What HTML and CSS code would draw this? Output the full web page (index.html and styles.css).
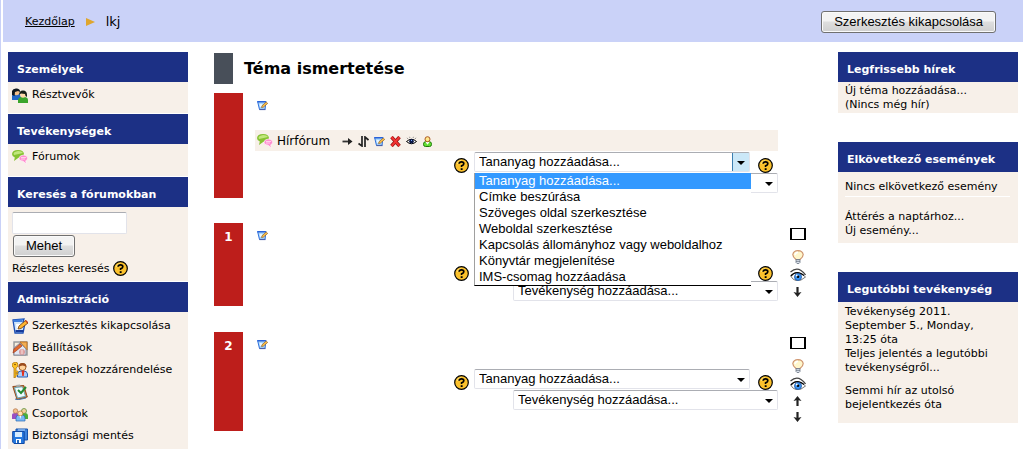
FILE: index.html
```html
<!DOCTYPE html>
<html lang="hu">
<head>
<meta charset="utf-8">
<meta name="viewport" content="width=device-width, initial-scale=1">
<title>lkj</title>
<link rel="stylesheet" href="styles.css">
</head>
<body>
<svg class="sprite" aria-hidden="true">
  <symbol id="i-edit" viewBox="0 0 16 16">
    <path d="M1 2 12 1l-1 3 2 1-2 10H3z" fill="#cfe6fb" stroke="#1c4fb5" stroke-width="1.3"/>
    <path d="M1 2 11 1l-1 3H2z" fill="#3f7fe0"/>
    <path d="M4 6h5l-2 6H5z" fill="#fff"/>
    <path d="M3.500 13h8" stroke="#163a9a" stroke-width="2"/>
    <path d="m6 11 1-3 6.500-5.500L16 5 9 10.500z" fill="#ffb52e" stroke="#6a3a10" stroke-width=".8"/>
    <path d="m13.500 2.500 2.300 2.300" stroke="#c43c16" stroke-width="1.500"/>
  </symbol>
  <symbol id="i-edit-small" viewBox="0 0 11 11">
    <path d="M.6 1.500h8.400L8 9.500H2.500z" fill="#a9d6fa" stroke="#2f6fdc"/>
    <path d="M.3 1h8.200v1.500H.6z" fill="#2a62d8"/>
    <path d="M2.500 4h3l-1 3H3z" fill="#e8f6ff"/>
    <path d="M2.500 9.500h6" stroke="#4a5fa8" stroke-width="1.200"/>
    <path d="M4.500 7.500 5 5.800 9.200 2l1.500 1.400L6.300 7.200z" fill="#ffc24a" stroke="#84501a" stroke-width=".6"/>
  </symbol>
  <symbol id="i-users" viewBox="0 0 16 16">
    <path d="M0 13V9q0-2 3-2h4q2 1 2 3v3z" fill="#2468c8"/>
    <circle cx="4.500" cy="5.500" r="2.800" fill="#f5c08a"/>
    <path d="M0 8V4Q1 1 5 1.500 8.500 2 8 5L6 4 3 5l-.5 4z" fill="#101820"/>
    <path d="M6 16v-3.500Q6.500 10 9 10h4q3 .5 3 3v3z" fill="#3ba52c"/>
    <circle cx="11" cy="8" r="2.800" fill="#ffd9a8"/>
    <path d="M7 8Q7 3.500 11 3.500t4 4.500v2l-1.500-1L13 7l-4-.5z" fill="#182018"/>
  </symbol>
  <symbol id="i-forum" viewBox="0 0 16 16">
    <path d="M6 1q5.500 0 6 4-.5 3.500-5.500 3.800L2 12l.8-3.500Q0 7.500 0 5q.5-4 6-4z" fill="#86c232"/>
    <path d="M6 2q4 0 5 2-4 1-9 2Q0 3 6 2z" fill="#c1e77d"/>
    <path d="M11.500 6q4 .2 4.200 3.200-.2 2-2 2.600l.6 3.200-3.300-2.800Q7 12 7 9.200 7.500 6.200 11.500 6z" fill="#ff8fd0" stroke="#fff" stroke-width=".6"/>
    <path d="M9 8.500h5M9 10h4" stroke="#ffd1eb"/>
  </symbol>
  <symbol id="i-settings" viewBox="0 0 16 16">
    <path d="M1 1h14.500v14.500H1z" fill="#fff"/>
    <path d="M2 2h13v13H2z" fill="#f6eedf" stroke="#999" stroke-width="1.500"/>
    <path d="M8 2h7v8z" fill="#f2ae55" stroke="#c17520"/>
    <path d="M2 15V8l6-5 6 6v6z" fill="#e1e7f3" stroke="#8e8f9e"/>
    <path d="m1 13 1-4 6-5 2 2-6 5z" fill="#e36b2e" stroke="#a13b20" stroke-width=".7"/>
    <path d="M8 10h4v4H8zM7 12h6" fill="#fff" stroke="#d78585"/>
  </symbol>
  <symbol id="i-roles" viewBox="0 0 16 16">
    <circle cx="10.500" cy="5" r="3.500" fill="#ffd29a" stroke="#a36127"/>
    <path d="M6.500 5q0-4 4-4t4 4q-4-3-8 0z" fill="#9b4b1c"/>
    <path d="M5.500 15v-3q.5-3 3.500-3h3q3 0 3.500 3v3z" fill="#a7ccfa" stroke="#295fb4"/>
    <path d="m10 9 1 5 1-5z" fill="#e52c15" stroke="#e52c15"/>
    <path d="M3 0q3 0 3 3 0 2-2 3v9l-2 1V6Q0 5 0 3t3-3z" fill="#ffc324" stroke="#a26809" stroke-width=".7"/>
    <path d="M4 9h2v1.500H4v1h2V13H4" fill="#ffc324" stroke="#a26809" stroke-width=".5"/>
    <circle cx="3" cy="2.500" r=".8" fill="#6d4507"/>
  </symbol>
  <symbol id="i-grades" viewBox="0 0 16 16">
    <path d="m.8 2.500 11-1 3.500 11.500L5 15.500z" fill="#dc762e" stroke="#8e4b21"/>
    <path d="m2.500 3.500 8-.7 3 9.500-8 1.700z" fill="#effbff" stroke="#65a9ba"/>
    <path d="m4 1 4-.5.500 2-4 .5z" fill="#aaa"/>
    <path d="m6 6 3 3 5-6" fill="none" stroke="#238b32" stroke-width="2"/>
    <path d="m3 15 3 .8 8-1.800" stroke="#4374a5" fill="none"/>
  </symbol>
  <symbol id="i-groups" viewBox="0 0 16 16">
    <path d="M0 13V9q0-2 3-2h3v6z" fill="#9a4fc2"/>
    <path d="M10 13V7h3q3 0 3 3v3z" fill="#4aae38"/>
    <circle cx="3.500" cy="5" r="2.300" fill="#f4bd8a" stroke="#b27447" stroke-width=".7"/>
    <circle cx="12" cy="5" r="2.500" fill="#f4ce9a" stroke="#5a943d" stroke-width=".8"/>
    <path d="M4 15v-3q0-3 3-3h3q3 0 3 3v3z" fill="#79b8f5" stroke="#2a68b5" stroke-width=".7"/>
    <circle cx="8.300" cy="7.500" r="2.500" fill="#ffe0b5" stroke="#c27b36" stroke-width=".8"/>
    <path d="m7.500 10 .8 3 .8-3z" fill="#fff"/>
  </symbol>
  <symbol id="i-backup" viewBox="0 0 16 16">
    <path d="M4 1h11.500v11H4z" fill="#3c83df" stroke="#1552ad"/>
    <path d="M.7 3.500h11.500v12H2L.7 14z" fill="#2578df" stroke="#1149a3"/>
    <path d="M3 4h7v5H3z" fill="#d7ecff"/>
    <path d="M4 11h5v4H4z" fill="#fff"/>
    <path d="M5 12h2v3H5z" fill="#2469bc"/>
    <path d="M6 2h7" stroke="#b6daff"/>
  </symbol>
  <symbol id="i-help" viewBox="0 0 15 15">
    <circle cx="7.500" cy="7.500" r="6.800" fill="#fbc12c" stroke="#000" stroke-width="1.200"/>
    <path d="M3 6q1-3 4-3.500" fill="none" stroke="#ffe680"/>
    <path d="M5.200 5.800Q5.200 3.900 7.500 3.900t2.300 1.800Q9.800 7 7.600 7.800V9" fill="none" stroke="#000" stroke-width="1.700"/>
    <path d="M6.700 10.200h1.900v1.800H6.700z"/>
  </symbol>
  <symbol id="i-right" viewBox="0 0 11 11"><path d="M.5 5.500h8" stroke="#333" stroke-width="1.800"/><path d="m6 2 4.500 3.500L6 9z" fill="#222"/></symbol>
  <symbol id="i-move" viewBox="0 0 11 11"><path d="M4 0v10L.5 7.500M7 11V1l3.500 3" fill="none" stroke="#222" stroke-width="1.700"/></symbol>
  <symbol id="i-delete" viewBox="0 0 11 11"><path d="m1.500 1 8 9M9.500 1l-8 9" stroke="#8f0d0d" stroke-width="3.400"/><path d="m1.500 1 8 9M9.500 1l-8 9" stroke="#f13232" stroke-width="2"/></symbol>
  <symbol id="i-eye-small" viewBox="0 0 11 11"><path d="M.5 5.500q5-4.500 10 0-5 4.500-10 0z" fill="#fff" stroke="#000"/><path d="M2 3 1 1.800M4 2 3.500.8M7 2l.5-1.200M9 3l1-1.200" stroke="#555" stroke-width=".6"/><circle cx="5.500" cy="5.300" r="2.300" fill="#0a1746"/><path d="M5 4h1v1H5z" fill="#75a4ff"/></symbol>
  <symbol id="i-person" viewBox="0 0 11 11"><rect x="1.500" y="5.800" width="8" height="4.700" rx="2" fill="#62dd31" stroke="#207b0b"/><path d="m3.500 6 2 2.800 2-2.800z" fill="#fff"/><circle cx="5.500" cy="3.200" r="2.500" fill="#ffe88b" stroke="#ac5720"/></symbol>
  <symbol id="i-bulb" viewBox="0 0 12 14"><path d="M4 9.500Q.8 7 .8 4.500 1.500.8 6 .7q4.500.1 5.200 3.800Q11.200 7 8 9.500z" fill="#fff7cc" stroke="#cf956f" stroke-width="1.200"/><path d="M3 5Q3.500 2.500 6 2.200" stroke="#fff" stroke-width="1.500" fill="none"/><path d="M4 9.500h4v3L7 13.500H5l-1-1z" fill="#dce3ed" stroke="#6d7786" stroke-width=".8"/><path d="M4 11.300h4" stroke="#66707e" stroke-width=".8"/></symbol>
  <symbol id="i-eye" viewBox="0 0 16 14"><path d="M.5 4Q6-.8 11 2.500q3 2 4.500 4.500" fill="none" stroke="#444" stroke-width="1.300"/><path d="M1 8.500Q4 3.500 9 5q4 1 6.500 4Q11 13.500 6 12.500 3 12 1 8.500z" fill="#fff" stroke="#555" stroke-width=".8"/><path d="M.8 8Q5 3 11 5.500l3 2" fill="none" stroke="#000" stroke-width="1.300"/><circle cx="8" cy="8.900" r="3.500" fill="#3d97f5" stroke="#164f9e" stroke-width=".8"/><circle cx="8" cy="8.700" r="1.300"/><circle cx="6.700" cy="7.500" r=".9" fill="#fff"/></symbol>
  <symbol id="i-down" viewBox="0 0 9 12"><path d="M4.500 1v7" stroke="#222" stroke-width="2.200"/><path d="M.5 6 4.500 7l4-1-4 5z" fill="#222"/></symbol>
  <symbol id="i-up" viewBox="0 0 9 12"><path d="M4.500 11V4" stroke="#222" stroke-width="2.200"/><path d="m.5 6 4-5 4 5-4-1z" fill="#222"/></symbol>
</svg>

<div class="page">
  <header class="navbar">
    <nav class="crumbs" aria-label="Navigáció">
      <a href="#">Kezdőlap</a>
      <svg class="crumb-arrow" viewBox="0 0 9 8" aria-hidden="true"><path d="M0 0l9 4-9 4z" fill="#dfa62e"/></svg>
      <span class="here">lkj</span>
    </nav>
    <button class="btn" type="button">Szerkesztés kikapcsolása</button>
  </header>

  <div class="columns">
    <aside class="side left">
      <section class="block">
        <h2>Személyek</h2>
        <ul class="links people">
          <li><svg class="icon"><use href="#i-users"/></svg><a href="#">Résztvevők</a></li>
        </ul>
      </section>
      <section class="block">
        <h2>Tevékenységek</h2>
        <ul class="links activities">
          <li><svg class="icon"><use href="#i-forum"/></svg><a href="#">Fórumok</a></li>
        </ul>
      </section>
      <section class="block">
        <h2>Keresés a fórumokban</h2>
        <form class="search">
          <input class="field" type="text" aria-label="Keresés a fórumokban">
          <button class="btn" type="button">Mehet</button>
          <div class="advanced"><a href="#">Részletes keresés</a><svg class="help"><use href="#i-help"/></svg></div>
        </form>
      </section>
      <section class="block grow">
        <h2>Adminisztráció</h2>
        <ul class="links">
          <li><svg class="icon"><use href="#i-edit"/></svg><a href="#">Szerkesztés kikapcsolása</a></li>
          <li><svg class="icon"><use href="#i-settings"/></svg><a href="#">Beállítások</a></li>
          <li><svg class="icon"><use href="#i-roles"/></svg><a href="#">Szerepek hozzárendelése</a></li>
          <li><svg class="icon"><use href="#i-grades"/></svg><a href="#">Pontok</a></li>
          <li><svg class="icon"><use href="#i-groups"/></svg><a href="#">Csoportok</a></li>
          <li><svg class="icon"><use href="#i-backup"/></svg><a href="#">Biztonsági mentés</a></li>
        </ul>
      </section>
    </aside>

    <main class="content">
      <h1>Téma ismertetése</h1>

      <section class="topic intro">
        <div class="tab"></div>
        <div class="body">
          <a class="summary" href="#" aria-label="Összefoglaló szerkesztése"><svg class="mini"><use href="#i-edit-small"/></svg></a>
          <div class="activity">
            <svg class="icon"><use href="#i-forum"/></svg><a href="#">Hírfórum</a>
            <span class="commands">
              <svg class="mini"><use href="#i-right"/></svg>
              <svg class="mini"><use href="#i-move"/></svg>
              <svg class="mini"><use href="#i-edit-small"/></svg>
              <svg class="mini"><use href="#i-delete"/></svg>
              <svg class="mini"><use href="#i-eye-small"/></svg>
              <svg class="mini"><use href="#i-person"/></svg>
            </span>
          </div>
          <div class="add">
            <svg class="help"><use href="#i-help"/></svg>
            <div class="pick open">
              <select aria-label="Tananyag hozzáadása"><option>Tananyag hozzáadása...</option></select>
              <ul class="menu" role="listbox" aria-label="Tananyag">
                <li role="option" aria-selected="true">Tananyag hozzáadása...</li>
                <li role="option">Címke beszúrása</li>
                <li role="option">Szöveges oldal szerkesztése</li>
                <li role="option">Weboldal szerkesztése</li>
                <li role="option">Kapcsolás állományhoz vagy weboldalhoz</li>
                <li role="option">Könyvtár megjelenítése</li>
                <li role="option">IMS-csomag hozzáadása</li>
              </ul>
            </div>
            <svg class="help"><use href="#i-help"/></svg>
          </div>
          <div class="add second">
            <div class="pick"><select aria-label="Tevékenység hozzáadása"><option>Tevékenység hozzáadása...</option></select></div>
          </div>
        </div>
      </section>

      <section class="topic">
        <div class="tab">1</div>
        <div class="body">
          <a class="summary" href="#" aria-label="Összefoglaló szerkesztése"><svg class="mini"><use href="#i-edit-small"/></svg></a>
          <div class="add">
            <svg class="help"><use href="#i-help"/></svg>
            <div class="pick"><select aria-label="Tananyag hozzáadása, 1. téma"><option>Tananyag hozzáadása...</option></select></div>
            <svg class="help"><use href="#i-help"/></svg>
          </div>
          <div class="add second">
            <div class="pick"><select aria-label="Tevékenység hozzáadása, 1. téma"><option>Tevékenység hozzáadása...</option></select></div>
          </div>
        </div>
        <div class="tools">
          <span class="only"></span>
          <svg class="bulb"><use href="#i-bulb"/></svg>
          <svg class="eye"><use href="#i-eye"/></svg>
          <svg class="arrow"><use href="#i-down"/></svg>
        </div>
      </section>

      <section class="topic">
        <div class="tab">2</div>
        <div class="body">
          <a class="summary" href="#" aria-label="Összefoglaló szerkesztése"><svg class="mini"><use href="#i-edit-small"/></svg></a>
          <div class="add">
            <svg class="help"><use href="#i-help"/></svg>
            <div class="pick"><select aria-label="Tananyag hozzáadása, 2. téma"><option>Tananyag hozzáadása...</option></select></div>
            <svg class="help"><use href="#i-help"/></svg>
          </div>
          <div class="add second">
            <div class="pick"><select aria-label="Tevékenység hozzáadása, 2. téma"><option>Tevékenység hozzáadása...</option></select></div>
          </div>
        </div>
        <div class="tools">
          <span class="only"></span>
          <svg class="bulb"><use href="#i-bulb"/></svg>
          <svg class="eye"><use href="#i-eye"/></svg>
          <svg class="arrow"><use href="#i-up"/></svg>
          <svg class="arrow"><use href="#i-down"/></svg>
        </div>
      </section>
    </main>

    <aside class="side right">
      <section class="block">
        <h2>Legfrissebb hírek</h2>
        <div class="text">
          <a href="#">Új téma hozzáadása...</a>
          <p>(Nincs még hír)</p>
        </div>
      </section>
      <section class="block">
        <h2>Elkövetkező események</h2>
        <div class="text events">
          <p class="none">Nincs elkövetkező esemény</p>
          <a href="#">Áttérés a naptárhoz...</a>
          <a href="#">Új esemény...</a>
        </div>
      </section>
      <section class="block">
        <h2>Legutóbbi tevékenység</h2>
        <div class="text recent">
          <p>Tevékenység 2011. September 5., Monday, 13:25 óta</p>
          <a href="#">Teljes jelentés a legutóbbi tevékenységről...</a>
          <p class="nothing">Semmi hír az utolsó bejelentkezés óta</p>
        </div>
      </section>
    </aside>
  </div>
</div>
</body>
</html>
```

FILE: styles.css
```css
* { box-sizing: border-box; }

body {
  margin: 0;
  background: #fff;
  color: #000;
  font: 11px/14px Verdana, "DejaVu Sans", sans-serif;
}

a { color: inherit; text-decoration: none; }
h1, h2, p, ul { margin: 0; padding: 0; }
ul { list-style: none; }
svg { display: block; flex: none; }
.sprite { position: absolute; width: 0; height: 0; }

.page {
  display: flex;
  flex-direction: column;
  min-height: 100vh;
  padding: 0 2px;
  border-left: 1px solid #c9d1f7;
}

/* Top bar */
.navbar {
  display: flex;
  align-items: center;
  justify-content: space-between;
  height: 42px;
  padding: 2px 27px 0 22px;
  background: #cad2f8;
}
.crumbs { display: flex; align-items: center; gap: 11px; }
.crumbs a { text-decoration: underline; }
.crumb-arrow { width: 9px; height: 8px; }
.here { font-size: 13px; }

.btn {
  height: 22px;
  padding: 0 12px;
  border: 1px solid #707070;
  border-radius: 3px;
  background: linear-gradient(#f3f3f3 0 45%, #dedede 50%, #cfcfcf);
  box-shadow: inset 0 0 0 1px #fafafa;
  color: #000;
  font: 13px/20px Arial, "Liberation Sans", sans-serif;
}

/* Three columns */
.columns {
  flex: 1;
  display: grid;
  grid-template-columns: 180px 1fr 180px;
  padding: 10px 5px 0 5px;
}
.side { display: flex; flex-direction: column; }
.left { gap: 1px; }
.right { gap: 29px; }

.block { background: #f7f0e9; }
.grow { flex: 1; }
.block h2 {
  height: 30px;
  padding: 11px 9px 0;
  background: #1c3085;
  color: #fff;
  font-size: 11px;
  line-height: 14px;
}
.icon { width: 16px; height: 16px; }
.help { width: 15px; height: 15px; }

.links { padding: 3px 4px 0; }
.links li { display: flex; align-items: center; gap: 4px; height: 22px; }
.people { padding: 2px 4px 7px; }
.activities { padding: 2px 4px 8px; }

.search {
  display: flex;
  flex-direction: column;
  align-items: flex-start;
  padding: 5px 4px;
}
.field {
  width: 115px;
  height: 22px;
  border: 1px solid #e2e3ea;
  border-top-color: #abadb3;
  border-radius: 2px;
  background: #fff;
  font: 13px Arial, "Liberation Sans", sans-serif;
}
.search .btn { margin: 1px 1px 4px; }
.advanced { display: flex; align-items: center; gap: 3px; }

.text { padding: 2px 8px 1px 7px; }
.text a { display: block; }
.events { padding: 8px 8px 5px 7px; }
.none { padding-bottom: 2px; border-bottom: 1px solid #fff; margin-bottom: 13px; white-space: nowrap; }
.recent { padding: 3px 16px 11px 7px; }
.nothing { margin-top: 9px; }

/* Course topics */
.content { padding: 0 32px 0 26px; }
h1 {
  margin: 1px 0 9px;
  padding-left: 11px;
  border-left: 19px solid #484f59;
  font-size: 16px;
  line-height: 31px;
}
.topic {
  display: grid;
  grid-template-columns: 29px 1fr 17px;
  column-gap: 11px;
  margin-bottom: 26px;
}
.intro { margin-bottom: 25px; }
.tab {
  padding-top: 7px;
  background: #bd1e1b;
  color: #fff;
  font-size: 12px;
  font-weight: bold;
  text-align: center;
}
.body { padding: 7px 0 5px 1px; }
.mini { width: 11px; height: 11px; }
.summary { display: block; width: 11px; margin: 0 0 19px 2px; }
.activity {
  display: flex;
  align-items: center;
  height: 21px;
  margin-bottom: 1px;
  padding-left: 2px;
  background: #f7f0e9;
  font-size: 12px;
}
.activity a { margin-left: 4px; }
.commands { display: flex; gap: 5px; margin: 2px 0 0 12px; }

.add {
  display: flex;
  align-items: flex-end;
  justify-content: flex-end;
  height: 21px;
  padding-right: 5px;
}
.add .help:first-child { margin-right: 5px; }
.add .help:last-child { margin-left: 8px; }
.pick { position: relative; width: 276px; align-self: flex-start; }
.second { height: 20px; padding-right: 0; }
.second .pick { width: 265px; }
.pick select {
  display: block;
  appearance: none;
  width: 100%;
  height: 20px;
  padding: 0 4px;
  border: 1px solid #e2e3ea;
  border-top-color: #abadb3;
  border-radius: 2px;
  background: #fff;
  color: #000;
  font: 13px/18px Arial, "Liberation Sans", sans-serif;
}
.pick::after {
  content: "";
  position: absolute;
  top: 9px;
  right: 5px;
  border: 4px solid transparent;
  border-top-color: #000;
  border-bottom: 0;
  pointer-events: none;
}
.pick.open select {
  background: linear-gradient(90deg, #3c7fb1 1px, #cbe8f8 1px) right / 17px 100% no-repeat #fff;
}
.menu {
  position: absolute;
  z-index: 2;
  top: 21px;
  left: 0;
  right: -1px;
  border: solid #a0a0a0;
  border-width: 0 0 0 1px;
  border-bottom: 1px solid #000;
  background: #fff;
  font: 13px/16px Arial, "Liberation Sans", sans-serif;
}
.menu li { padding-left: 4px; }
.menu [aria-selected="true"] { background: #3399ff; color: #fff; }

/* Topic controls */
.tools {
  display: flex;
  flex-direction: column;
  align-items: center;
  gap: 4px;
  padding: 5px 0 8px;
}
.only { width: 16px; height: 12px; margin-bottom: 6px; border: 2px solid #000; border-width: 1px 2px; }
.bulb { width: 12px; height: 14px; }
.eye { width: 16px; height: 14px; }
.arrow { width: 9px; height: 12px; }
```
